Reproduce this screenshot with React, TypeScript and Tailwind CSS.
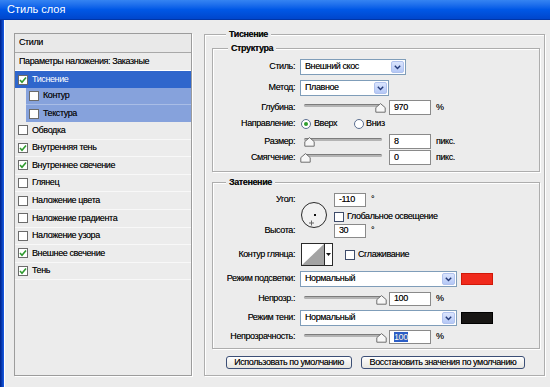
import React from "react";

const Check = () => (
  <svg width="8" height="8" viewBox="0 0 8 8" className="block">
    <path d="M1 4 L3 6.3 L7 1.5" fill="none" stroke="#2f9a2f" strokeWidth="1.6" />
  </svg>
);

const Checkbox = ({ checked = false, dark = false }: { checked?: boolean; dark?: boolean }) => (
  <div
    className={`w-[10px] h-[10px] shrink-0 bg-white border flex items-center justify-center ${
      dark ? "border-[#3e4c6a]" : "border-[#6b6b6b]"
    }`}
  >
    {checked && <Check />}
  </div>
);

const Select = ({ value, width }: { value: string; width: string }) => (
  <div className={`${width} h-full bg-white border border-[#7f9db9] flex items-stretch`}>
    <div className="flex-1 flex items-center pl-[4px]">{value}</div>
    <div className="w-[13px] m-[1px] rounded-[2px] bg-gradient-to-b from-[#dbe5fd] to-[#b5c8f6] border border-[#b0c2ee] flex items-center justify-center">
      <svg width="7" height="5" viewBox="0 0 7 5">
        <path d="M0.8 0.8 L3.5 3.6 L6.2 0.8" fill="none" stroke="#243a78" strokeWidth="1.4" />
      </svg>
    </div>
  </div>
);

const Input = ({ value, width = "w-[42px]", selected = false }: { value: string; width?: string; selected?: boolean }) => (
  <div className={`${width} h-full bg-white border border-[#8a8a8a] flex items-center pl-[4px]`}>
    {selected ? <span className="bg-[#2c5ec6] text-white leading-[10px]">{value}</span> : value}
  </div>
);

const Slider = ({ thumb }: { thumb: number }) => (
  <div className="relative w-[86px] h-full">
    <div className="mt-[4px] mx-[4px] h-[3px] rounded-full bg-[#b4b4b4] border-t border-[#7c7c7c]" />
    <svg width="11" height="10" viewBox="0 0 11 10" className="absolute top-[3px]" style={{ left: thumb }}>
      <path d="M5.5 0.6 L10.2 4.6 L10.2 9.2 L0.8 9.2 L0.8 4.6 Z" fill="#f7f7f7" stroke="#6e6e6e" strokeWidth="1" />
    </svg>
  </div>
);

const Label = ({ children }: { children: React.ReactNode }) => (
  <div className="w-[83px] shrink-0 text-right pr-[1px]">{children}</div>
);

const Row = ({ label, className, children }: { label: string; className: string; children: React.ReactNode }) => (
  <div className={`flex items-center ${className}`}>
    <Label>{label}</Label>
    <div className="ml-[4px] flex items-center h-full">{children}</div>
  </div>
);

const Group = ({ title, titleMl, className, children }: { title: string; titleMl: string; className: string; children: React.ReactNode }) => (
  <div className={`flex flex-col border border-[#adadad] shadow-[1px_1px_0_#fff,inset_1px_1px_0_#fff] ${className}`}>
    <span className={`-mt-[6px] ${titleMl} px-[3px] w-fit leading-[11px] bg-[#ececec] font-bold`}>{title}</span>
    {children}
  </div>
);

const styles: { name: string; checked: boolean }[] = [
  { name: "Обводка", checked: false },
  { name: "Внутренняя тень", checked: true },
  { name: "Внутреннее свечение", checked: true },
  { name: "Глянец", checked: false },
  { name: "Наложение цвета", checked: false },
  { name: "Наложение градиента", checked: false },
  { name: "Наложение узора", checked: false },
  { name: "Внешнее свечение", checked: true },
  { name: "Тень", checked: true },
];

export default function App() {
  return (
    <div className="w-[550px] h-[387px] overflow-hidden flex flex-col bg-[#ececec] font-['Liberation_Sans',Arial,sans-serif] text-[9px] tracking-[-0.4px] text-[#0a0a0a] [text-shadow:0_0_0.4px_rgba(0,0,0,0.55)]">
      {/* title bar */}
      <div className="h-[20px] shrink-0 flex items-center pl-[7px] bg-gradient-to-b from-[#3584f2] via-[#0058e6] to-[#0046cc] border-b border-[#0036a8] text-white text-[11px] tracking-normal [text-shadow:none]">
        Стиль слоя
      </div>

      <div className="flex flex-1 min-h-0">
        <div className="w-[4px] shrink-0 bg-gradient-to-r from-[#00208a] to-[#1a5ce6]" />
        <div className="flex-1 flex border-l border-white pl-[9px] pt-[13px]">
          {/* left list */}
          <div className="w-[178px] h-[343px] border border-[#9c9c9c] shadow-[1px_1px_0_#fff] flex flex-col">
            <div className="h-[19px] shrink-0 flex items-center pl-[4px] border-b border-[#a8a8a8] bg-[#e9e9e9]">Стили</div>
            <div className="h-[18px] shrink-0 flex items-center pl-[4px] border-b border-white">Параметры наложения: Заказные</div>
            <div className="h-[17px] shrink-0 flex items-center pl-[3px] bg-[#2f66cc] text-white gap-[4px] [text-shadow:none]">
              <Checkbox checked />
              <span>Тиснение</span>
            </div>
            <div className="h-[17px] shrink-0 ml-[11px] flex items-center pl-[3px] bg-[#86a2dc] border-b border-[#a9bde6] gap-[4px]">
              <Checkbox />
              <span>Контур</span>
            </div>
            <div className="h-[17px] shrink-0 ml-[11px] flex items-center pl-[3px] bg-[#86a2dc] gap-[4px]">
              <Checkbox />
              <span>Текстура</span>
            </div>
            {styles.map((s) => (
              <div key={s.name} className="h-[17.6px] shrink-0 flex items-center pl-[3px] gap-[4px] border-b border-[#f8f8f8]">
                <Checkbox checked={s.checked} />
                <span>{s.name}</span>
              </div>
            ))}
          </div>

          {/* right panel */}
          <Group title="Тиснение" titleMl="ml-[21px]" className="ml-[12px] mt-[1px] w-[341px] h-[342px]">
            <Group title="Структура" titleMl="ml-[15px]" className="ml-[7px] mt-[8px] w-[328px] pb-[6px]">
              <Row label="Стиль:" className="h-[16px] mt-[5px]">
                <Select value="Внешний скос" width="w-[106px]" />
              </Row>
              <Row label="Метод:" className="h-[16px] mt-[5px]">
                <Select value="Плавное" width="w-[89px]" />
              </Row>
              <Row label="Глубина:" className="h-[15px] mt-[4px]">
                <Slider thumb={75} />
                <div className="ml-[3px] h-full">
                  <Input value="970" />
                </div>
                <span className="ml-[5px]">%</span>
              </Row>
              <Row label="Направление:" className="h-[14px] mt-[2px]">
                <div className="ml-[1px] w-[10px] h-[10px] rounded-full bg-white border border-[#5b6f90] flex items-center justify-center">
                  <div className="w-[4px] h-[4px] rounded-full bg-[#2e9e2e]" />
                </div>
                <span className="ml-[3px]">Вверх</span>
                <div className="ml-[17px] w-[10px] h-[10px] rounded-full bg-white border border-[#5b6f90]" />
                <span className="ml-[2px]">Вниз</span>
              </Row>
              <Row label="Размер:" className="h-[15px] mt-[3px]">
                <Slider thumb={4} />
                <div className="ml-[3px] h-full">
                  <Input value="8" />
                </div>
                <span className="ml-[5px]">пикс.</span>
              </Row>
              <Row label="Смягчение:" className="h-[15px] mt-[1px]">
                <Slider thumb={0} />
                <div className="ml-[3px] h-full">
                  <Input value="0" />
                </div>
                <span className="ml-[5px]">пикс.</span>
              </Row>
            </Group>

            <Group title="Затенение" titleMl="ml-[13px]" className="ml-[7px] mt-[10px] w-[328px] pb-[4px]">
              {/* angle / altitude */}
              <div className="flex mt-[5px] h-[45px]">
                <div className="w-[83px] shrink-0 text-right pr-[1px] flex flex-col">
                  <div className="h-[14px] flex items-center justify-end">Угол:</div>
                  <div className="h-[14px] mt-[17px] flex items-center justify-end">Высота:</div>
                </div>
                <svg width="28" height="28" viewBox="0 0 28 28" className="ml-[4px] mt-[8px] shrink-0">
                  <circle cx="14" cy="14" r="12.5" fill="#f1f1f1" stroke="#2a2a2a" strokeWidth="1" />
                  <rect x="14" y="13" width="2" height="2" fill="#111" />
                  <path d="M11.5 19.5 V24.5 M9 22 H14" stroke="#666" strokeWidth="1" />
                </svg>
                <div className="ml-[6px] flex flex-col">
                  <div className="flex h-[14px]">
                    <Input value="-110" width="w-[32px]" />
                    <span className="ml-[5px] mt-[2px] leading-[9px]">°</span>
                  </div>
                  <div className="flex items-center mt-[5px] h-[10px]">
                    <Checkbox dark />
                    <span className="ml-[3px]">Глобальное освещение</span>
                  </div>
                  <div className="flex h-[14px] mt-[2px]">
                    <Input value="30" width="w-[32px]" />
                    <span className="ml-[5px] mt-[2px] leading-[9px]">°</span>
                  </div>
                </div>
              </div>

              <div className="flex items-center h-[23px] mt-[5px]">
                <Label>Контур глянца:</Label>
                <div className="ml-[5px] w-[32px] h-full border border-[#2a2a2a] flex bg-white">
                  <svg width="22" height="21" viewBox="0 0 22 21" className="block">
                    <polygon points="0,21 22,0 22,21" fill="#a3a3a3" />
                  </svg>
                  <div className="flex-1 border-l border-[#2a2a2a] flex items-center justify-center">
                    <svg width="5" height="3" viewBox="0 0 5 3">
                      <polygon points="0,0 5,0 2.5,3" fill="#111" />
                    </svg>
                  </div>
                </div>
                <div className="ml-[12px]">
                  <Checkbox dark />
                </div>
                <span className="ml-[3px]">Сглаживание</span>
              </div>

              <Row label="Режим подсветки:" className="h-[16px] mt-[5px]">
                <Select value="Нормальный" width="w-[157px]" />
                <div className="ml-[4px] w-[32px] h-[12px] bg-[#f02a1c] border border-[#d01808]" />
              </Row>
              <Row label="Непрозр.:" className="h-[14px] mt-[5px]">
                <Slider thumb={76} />
                <div className="ml-[3px] h-full">
                  <Input value="100" />
                </div>
                <span className="ml-[5px]">%</span>
              </Row>
              <Row label="Режим тени:" className="h-[16px] mt-[4px]">
                <Select value="Нормальный" width="w-[157px]" />
                <div className="ml-[4px] w-[32px] h-[12px] bg-[#181614] border border-[#000]" />
              </Row>
              <Row label="Непрозрачность:" className="h-[14px] mt-[4px]">
                <Slider thumb={76} />
                <div className="ml-[3px] h-full">
                  <Input value="100" selected />
                </div>
                <span className="ml-[5px]">%</span>
              </Row>
            </Group>

            <div className="flex mt-[7px] ml-[21px]">
              <div className="w-[126px] h-[13px] rounded-[3px] border border-[#3c4f76] bg-gradient-to-b from-white to-[#e6e5e0] flex items-center justify-center">
                Использовать по умолчанию
              </div>
              <div className="ml-[9px] w-[164px] h-[13px] rounded-[3px] border border-[#3c4f76] bg-gradient-to-b from-white to-[#e6e5e0] flex items-center justify-center">
                Восстановить значения по умолчанию
              </div>
            </div>
          </Group>
        </div>
      </div>
    </div>
  );
}
